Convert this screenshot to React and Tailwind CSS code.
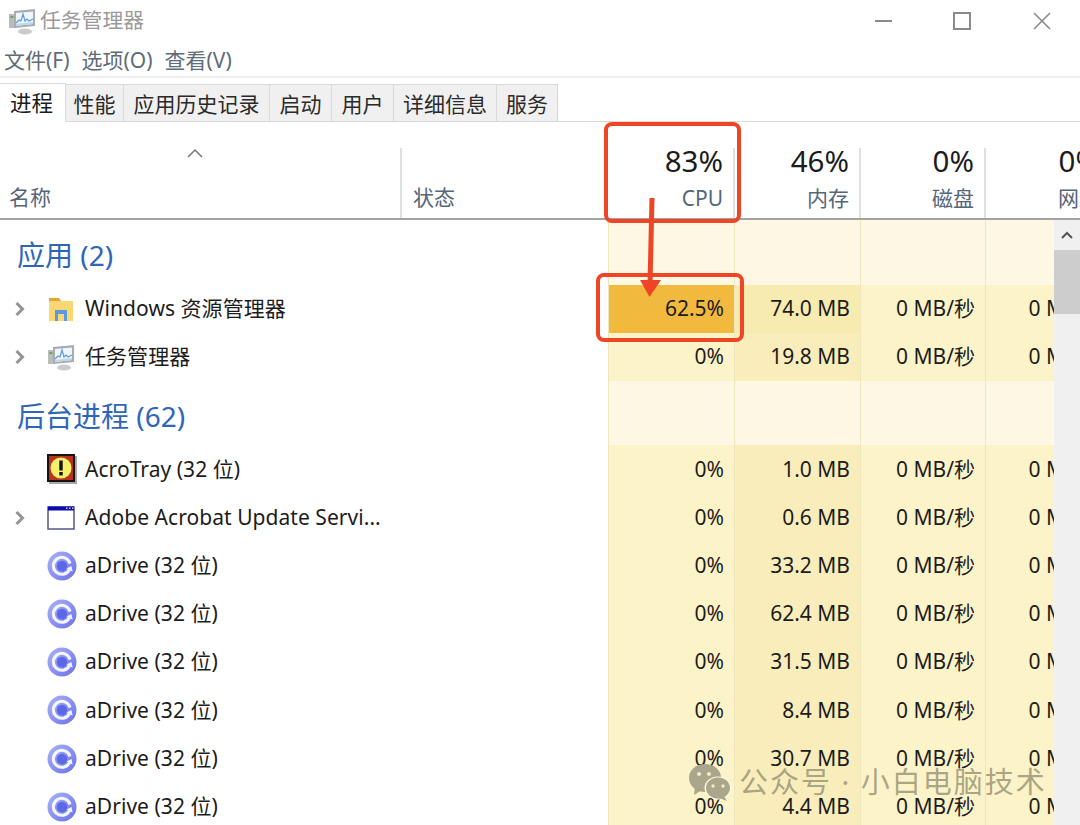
import React from 'react';

const font = '[font-family:"Noto_Sans","Noto_Sans_CJK_SC",sans-serif]';

function TaskIcon({ size = 28 }) {
  return (
    <svg width={size} height={size} viewBox="0 0 28 28">
      <rect x="1" y="7" width="7" height="14" fill="#b9bcbd" />
      <rect x="2.5" y="9" width="3" height="2" fill="#6fa05f" />
      <path d="M6 4 L27 2 V19 L6 21 Z" fill="#a9adaf" />
      <path d="M8 6 L25 4.5 V17 L8 19 Z" fill="#eef5fb" />
      <path d="M8 16 L11 13 L13 14 L15 7 L17 14 L19 12 L21 14 L25 12" fill="none" stroke="#5f9bd6" strokeWidth="1.2" />
      <path d="M8 19 L25 17 V15 L8 17 Z" fill="#bcd7ef" />
      <ellipse cx="17" cy="24.5" rx="7" ry="3" fill="#c9cbcc" />
    </svg>
  );
}

function FolderIcon() {
  return (
    <svg width="28" height="28" viewBox="0 0 28 28">
      <path d="M2 3 H12 L14 6 H2 Z" fill="#dfa637" />
      <rect x="2" y="6" width="24" height="20" fill="#fbd774" />
      <path d="M8 26 V15 H20 V26 H17 V19 H11 V26 Z" fill="#5a9be0" />
    </svg>
  );
}

function AcroIcon() {
  return (
    <svg width="30" height="30" viewBox="0 0 30 30">
      <rect x="2" y="2" width="28" height="28" fill="#a8a8a8" />
      <rect x="0" y="0" width="28" height="28" fill="#141414" />
      <rect x="2" y="2" width="24" height="24" fill="#b8321f" />
      <circle cx="14" cy="14" r="10.5" fill="#f4f06a" />
      <rect x="12.3" y="6.5" width="3.4" height="10" fill="#111" />
      <rect x="12.3" y="18" width="3.4" height="3.4" fill="#111" />
    </svg>
  );
}

function WindowIcon() {
  return (
    <svg width="28" height="24" viewBox="0 0 28 24">
      <rect x="1" y="1" width="26" height="22" fill="#fff" stroke="#55558f" strokeWidth="1.5" />
      <rect x="1" y="0.5" width="26" height="4" fill="#0b0bb0" />
      <rect x="19" y="1.5" width="1.5" height="1.5" fill="#ccd" />
      <rect x="22" y="1.5" width="1.5" height="1.5" fill="#ccd" />
      <rect x="25" y="1.5" width="1.5" height="1.5" fill="#ccd" />
    </svg>
  );
}

function DriveIcon() {
  return (
    <svg width="30" height="30" viewBox="0 0 30 30">
      <defs>
        <linearGradient id="drive" x1="0" y1="0" x2="1" y2="1">
          <stop offset="0" stopColor="#a9b4f6" />
          <stop offset="1" stopColor="#6b70e8" />
        </linearGradient>
      </defs>
      <circle cx="15" cy="15" r="14.5" fill="url(#drive)" />
      <path d="M22.5 18.5 A8.5 8.5 0 1 1 23 12.5" fill="none" stroke="#f4f5ff" strokeWidth="3" />
      <path d="M19.5 17.5 L24.5 15 L25.5 20.5 Z" fill="#f4f5ff" />
      <circle cx="15" cy="15" r="5.2" fill="#5a6ae6" />
    </svg>
  );
}

function Chevron() {
  return (
    <svg width="12" height="16" viewBox="0 0 12 16">
      <path d="M2.5 2 L8.5 8 L2.5 14" fill="none" stroke="#949494" strokeWidth="3" />
    </svg>
  );
}

function GroupRow({ title }) {
  return (
    <div className="flex h-[64.5px]">
      <div className="w-[608px] shrink-0 bg-white pl-[17px] pt-[6px] flex items-center text-[28px] text-[#2f66b9]">{title}</div>
      <div className="w-[126px] shrink-0 bg-[#fdf7e3] border-l border-[#f0e6bd]" />
      <div className="w-[126px] shrink-0 bg-[#fdf7e3] border-l border-[#f0e6bd]" />
      <div className="w-[125px] shrink-0 bg-[#fdf7e3] border-l border-[#f0e6bd]" />
      <div className="w-[126px] shrink-0 bg-[#fdf7e3] border-l border-[#f0e6bd]" />
    </div>
  );
}

function ProcessRow({ icon, name, expand, cpu, mem, hot }) {
  const cell = 'shrink-0 flex items-center justify-end pr-[10px] border-l border-[#f0e6bd] text-[21px] text-[#1c1c1c]';
  return (
    <div className="flex h-[48.2px]">
      <div className="w-[608px] shrink-0 bg-white flex items-center">
        <div className="w-[47px] shrink-0 pl-[14px] flex items-center">{expand && <Chevron />}</div>
        <div className="w-[38px] shrink-0 flex items-center">{icon}</div>
        <span className="text-[21px] tracking-[0.05px] text-[#1c1c1c] whitespace-nowrap">{name}</span>
      </div>
      <div className={`w-[126px] ${cell} ${hot ? 'bg-[#f2b93f]' : 'bg-[#fcf3c8]'}`}>{cpu}</div>
      <div className={`w-[126px] ${cell} ${hot ? 'bg-[#f7ebb0]' : 'bg-[#f9eebb]'}`}>{mem}</div>
      <div className={`w-[125px] ${cell} bg-[#fcf3c8]`}>0 MB/秒</div>
      <div className={`w-[126px] ${cell} bg-[#fcf3c8]`}>0 Mbps</div>
    </div>
  );
}

function HeadCol({ width, pct, label }) {
  return (
    <div className={`${width} shrink-0 flex flex-col items-end pr-[11px]`}>
      <div className="h-[25px]" />
      <div className="h-[28px] flex items-center text-[29.5px] text-[#1c1c1c]">{pct}</div>
      <div className="mt-[8px] text-[21px] leading-[30px] text-[#566579]">{label}</div>
    </div>
  );
}

const tabs = [
  ['性能', 'w-[58px]'],
  ['应用历史记录', 'w-[146px]'],
  ['启动', 'w-[62px]'],
  ['用户', 'w-[62px]'],
  ['详细信息', 'w-[103px]'],
  ['服务', 'w-[61px]'],
];

const drives = [
  ['33.2 MB'],
  ['62.4 MB'],
  ['31.5 MB'],
  ['8.4 MB'],
  ['30.7 MB'],
  ['4.4 MB'],
];

export default function App() {
  return (
    <div className={`relative w-[1080px] h-[825px] overflow-hidden bg-white ${font}`}>
      {/* Title bar */}
      <div className="h-[42px] flex items-center pl-[8px]">
        <TaskIcon />
        <span className="ml-[4px] text-[20.8px] text-[#9a9a9a]">任务管理器</span>
        <div className="ml-auto flex items-center">
          <div className="w-[74px] flex justify-center"><div className="w-[17px] h-[2px] bg-[#8a8a8a]" /></div>
          <div className="w-[84px] flex justify-center"><div className="w-[18px] h-[18px] border-2 border-[#8a8a8a]" /></div>
          <div className="w-[76px] flex justify-center">
            <svg width="18" height="18" viewBox="0 0 18 18"><path d="M1 1 L17 17 M17 1 L1 17" stroke="#8a8a8a" strokeWidth="1.6" /></svg>
          </div>
        </div>
      </div>

      {/* Menu */}
      <div className="h-[36px] flex items-center pl-[4px] pt-[4px] gap-[12px] text-[21px] text-[#606b78] border-b-2 border-[#f0f0f0]">
        <span>文件(F)</span>
        <span>选项(O)</span>
        <span>查看(V)</span>
      </div>

      {/* Tabs */}
      <div className="h-[44px] flex items-end border-b border-[#d9d9d9]">
        <div className="w-[66px] h-[39px] bg-white border-t border-r border-[#d9d9d9] flex items-center pl-[10px] text-[21.5px] text-[#1c1c1c] -mb-px">进程</div>
        {tabs.map(([label, w]) => (
          <div key={label} className={`${w} h-[37px] pt-[3px] bg-[#f0f0f0] border-t border-r border-[#d9d9d9] flex items-center justify-center text-[21px] text-[#2a2a2a]`}>
            {label}
          </div>
        ))}
      </div>

      {/* Column header */}
      <div className="relative h-[98px] flex border-b-2 border-[#a3a3a3] overflow-hidden">
        <div className="w-[401px] shrink-0 flex flex-col justify-end pl-[9px] pb-[5px] text-[21px] text-[#566579]">名称</div>
        <div className="w-[207px] shrink-0 flex flex-col justify-end pl-[12px] pb-[5px] text-[21px] text-[#566579]">状态</div>
        <HeadCol width="w-[126px]" pct="83%" label="CPU" />
        <HeadCol width="w-[126px]" pct="46%" label="内存" />
        <HeadCol width="w-[125px]" pct="0%" label="磁盘" />
        <HeadCol width="w-[126px]" pct="0%" label="网络" />
        {[400, 733, 859, 984].map((x) => (
          <div key={x} className="absolute top-[26px] bottom-0 w-[2px] bg-[#e0e0e0]" style={{ left: x }} />
        ))}
        <svg className="absolute left-[187px] top-[26px]" width="16" height="10" viewBox="0 0 16 10">
          <path d="M1 9 L8 2 L15 9" fill="none" stroke="#777" strokeWidth="1.5" />
        </svg>
      </div>

      {/* Process list */}
      <div className="flex h-[605px] overflow-hidden">
        <div className="w-[1054px] shrink-0 overflow-hidden">
          <div className="w-[1111px]">
            <GroupRow title="应用 (2)" />
            <ProcessRow expand hot icon={<FolderIcon />} name="Windows 资源管理器" cpu="62.5%" mem="74.0 MB" />
            <ProcessRow expand icon={<TaskIcon />} name="任务管理器" cpu="0%" mem="19.8 MB" />
            <GroupRow title="后台进程 (62)" />
            <ProcessRow icon={<AcroIcon />} name="AcroTray (32 位)" cpu="0%" mem="1.0 MB" />
            <ProcessRow expand icon={<WindowIcon />} name="Adobe Acrobat Update Servi..." cpu="0%" mem="0.6 MB" />
            {drives.map(([mem]) => (
              <ProcessRow key={mem} icon={<DriveIcon />} name="aDrive (32 位)" cpu="0%" mem={mem} />
            ))}
          </div>
        </div>
        <div className="w-[26px] shrink-0 bg-[#f0f0f0] flex flex-col">
          <div className="h-[30px] flex items-center justify-center">
            <svg width="12" height="8" viewBox="0 0 12 8"><path d="M1 7 L6 2 L11 7" fill="none" stroke="#555" strokeWidth="2" /></svg>
          </div>
          <div className="h-[64px] bg-[#cdcdcd]" />
        </div>
      </div>

      {/* Annotations over the screenshot */}
      <div className="absolute left-[604px] top-[122px] w-[137px] h-[101px] border-4 border-[#ee4527] rounded-[8px]" />
      <div className="absolute left-[596px] top-[273px] w-[148px] h-[69px] border-4 border-[#ee4527] rounded-[8px]" />
      <svg className="absolute left-[635px] top-[195px]" width="30" height="106" viewBox="0 0 30 106">
        <path d="M17 3 L15 90" stroke="#ee4527" strokeWidth="5" />
        <path d="M5 85 L26 85 L14.5 102 Z" fill="#ee4527" />
      </svg>

      {/* Watermark */}
      <div className="absolute left-[688px] top-[762px] flex items-center">
        <svg width="44" height="40" viewBox="0 0 44 40">
          <ellipse cx="17" cy="15" rx="16" ry="14" fill="#a9a68c" />
          <path d="M7 24 L6 32 L14 27 Z" fill="#a9a68c" />
          <ellipse cx="30" cy="25" rx="13.5" ry="11.5" fill="#fff8dc" />
          <ellipse cx="30" cy="25" rx="12" ry="10.5" fill="#a9a68c" />
          <path d="M36 33 L39 38 L31 35 Z" fill="#a9a68c" />
          <circle cx="11" cy="11" r="2" fill="#f3eccb" />
          <circle cx="21" cy="11" r="2" fill="#f3eccb" />
          <circle cx="25" cy="23" r="1.7" fill="#f3eccb" />
          <circle cx="35" cy="23" r="1.7" fill="#f3eccb" />
        </svg>
        <span className="ml-[7px] -mt-[2px] text-[29px] tracking-[2px] text-[#8f8c6e]/75 whitespace-nowrap">公众号 · 小白电脑技术</span>
      </div>
    </div>
  );
}
